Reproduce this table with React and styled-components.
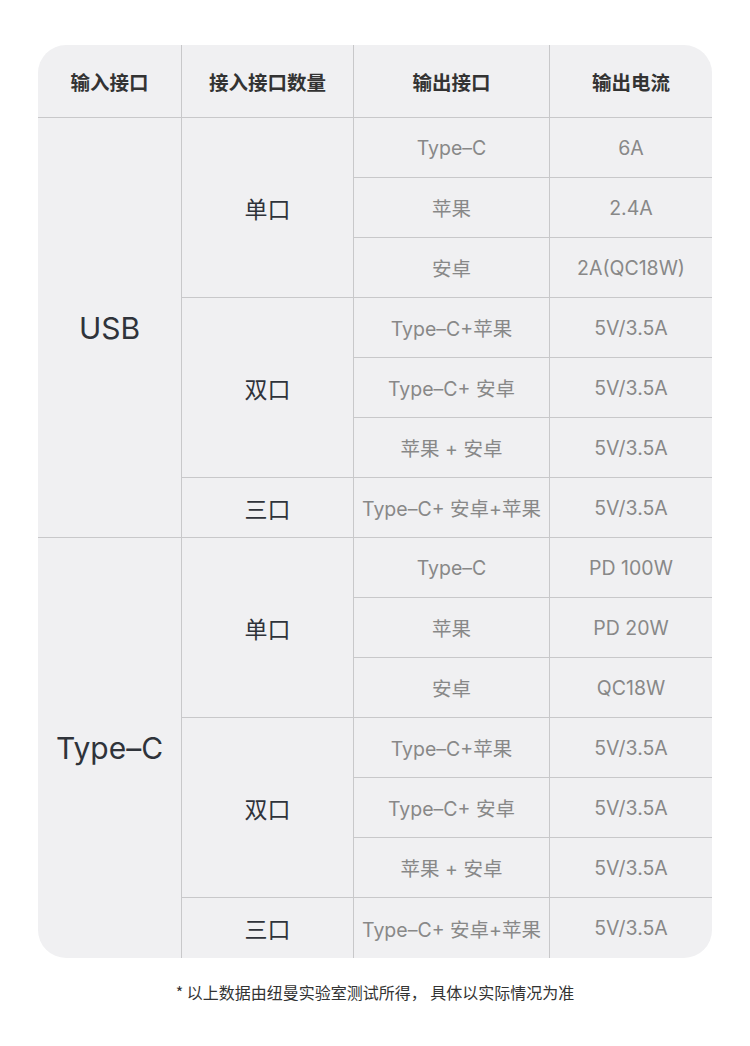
import React from 'react';
import styled, { createGlobalStyle } from 'styled-components';

const GlobalStyle = createGlobalStyle`
  body {
    margin: 0;
    background: #fff;
    font-family: Inter, "Noto Sans CJK SC", sans-serif;
  }
`;

const Page = styled.div`
  width: 750px;
  padding: 45px 38px 0;
  box-sizing: border-box;
`;

const Table = styled.div`
  display: grid;
  grid-template-columns: 144px 172px 196px 162px;
  grid-template-rows: 73px repeat(14, 60px);
  background: #f0f0f2;
  border-radius: 28px;
  overflow: hidden;
`;

const Cell = styled.div`
  display: flex;
  align-items: center;
  justify-content: center;
  box-sizing: border-box;
  border-right: ${(p) => (p.$last ? 'none' : '1px solid #c8c8ca')};
  border-bottom: ${(p) => (p.$bottom ? 'none' : '1px solid #c8c8ca')};
  grid-row: ${(p) => (p.$span ? `span ${p.$span}` : 'auto')};
  white-space: nowrap;
`;

const Head = styled(Cell)`
  font-size: 19.5px;
  font-weight: 700;
  color: #333;
`;

const Port = styled(Cell)`
  font-size: 30px;
  color: #2f333a;
`;

const Count = styled(Cell)`
  font-size: 23px;
  color: #2f333a;
`;

const Value = styled(Cell)`
  font-size: 19.5px;
  color: #888;
`;

const Note = styled.p`
  margin: 22px 0 0;
  text-align: center;
  font-family: "Noto Sans CJK SC", sans-serif;
  font-size: 16px;
  color: #333;
`;

const groups = [
  {
    port: 'USB',
    counts: [
      { name: '单口', rows: [['Type–C', '6A'], ['苹果', '2.4A'], ['安卓', '2A(QC18W)']] },
      { name: '双口', rows: [['Type–C+苹果', '5V/3.5A'], ['Type–C+ 安卓', '5V/3.5A'], ['苹果 + 安卓', '5V/3.5A']] },
      { name: '三口', rows: [['Type–C+ 安卓+苹果', '5V/3.5A']] },
    ],
  },
  {
    port: 'Type–C',
    counts: [
      { name: '单口', rows: [['Type–C', 'PD 100W'], ['苹果', 'PD 20W'], ['安卓', 'QC18W']] },
      { name: '双口', rows: [['Type–C+苹果', '5V/3.5A'], ['Type–C+ 安卓', '5V/3.5A'], ['苹果 + 安卓', '5V/3.5A']] },
      { name: '三口', rows: [['Type–C+ 安卓+苹果', '5V/3.5A']] },
    ],
  },
];

export default function App() {
  const cells = [];
  groups.forEach((g, gi) => {
    const lastGroup = gi === groups.length - 1;
    const total = g.counts.reduce((n, c) => n + c.rows.length, 0);
    let first = true;
    g.counts.forEach((c, ci) => {
      const lastCount = lastGroup && ci === g.counts.length - 1;
      c.rows.forEach((r, ri) => {
        const lastRow = lastCount && ri === c.rows.length - 1;
        if (first) {
          cells.push(<Port key={`p${gi}`} $span={total} $bottom={lastGroup}>{g.port}</Port>);
          first = false;
        }
        if (ri === 0) {
          cells.push(<Count key={`c${gi}${ci}`} $span={c.rows.length} $bottom={lastCount}>{c.name}</Count>);
        }
        cells.push(<Value key={`o${gi}${ci}${ri}`} $bottom={lastRow}>{r[0]}</Value>);
        cells.push(<Value key={`a${gi}${ci}${ri}`} $bottom={lastRow} $last>{r[1]}</Value>);
      });
    });
  });

  return (
    <Page>
      <GlobalStyle />
      <Table>
        <Head>输入接口</Head>
        <Head>接入接口数量</Head>
        <Head>输出接口</Head>
        <Head $last>输出电流</Head>
        {cells}
      </Table>
      <Note>* 以上数据由纽曼实验室测试所得， 具体以实际情况为准</Note>
    </Page>
  );
}
